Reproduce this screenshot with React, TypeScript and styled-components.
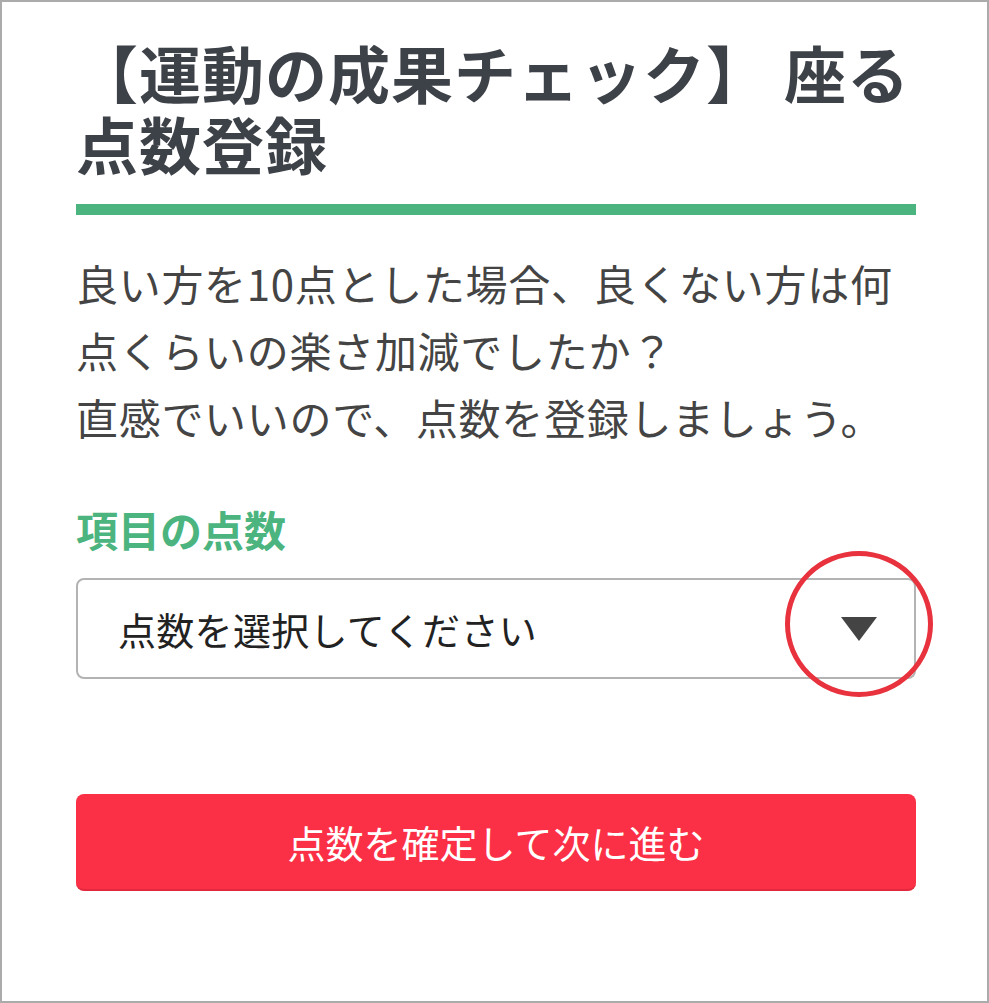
import styled, { createGlobalStyle } from "styled-components";

const GlobalStyle = createGlobalStyle`
  html, body {
    margin: 0;
    padding: 0;
    background: #fff;
  }
  body {
    font-family: "Noto Sans CJK JP", "Noto Sans", sans-serif;
  }
`;

const Frame = styled.div`
  box-sizing: border-box;
  width: 989px;
  height: 1003px;
  border: 2px solid #ababab;
  background: #fff;
  padding: 35px 71px 0 74px;
`;

const Title = styled.h1`
  margin: 0;
  padding-bottom: 25px;
  border-bottom: 11px solid #4cb47f;
  font-size: 62px;
  line-height: 71px;
  font-weight: 700;
  letter-spacing: 1px;
  color: #3d4148;
`;

const Lead = styled.p`
  margin: 34px 0 0;
  font-size: 42px;
  line-height: 67px;
  letter-spacing: 0.7px;
  color: #444;
`;

const Label = styled.div`
  margin-top: 49px;
  font-size: 42px;
  line-height: 59px;
  font-weight: 700;
  color: #4cb47f;
`;

const SelectWrap = styled.div`
  position: relative;
  margin-top: 20px;
`;

const SelectBox = styled.div`
  box-sizing: border-box;
  height: 101px;
  display: flex;
  align-items: center;
  justify-content: space-between;
  padding: 0 37px 0 40px;
  border: 2px solid #b3b3b3;
  border-radius: 8px;
  background: #fff;
  font-size: 38px;
  letter-spacing: 0.3px;
  color: #222;
`;

const Arrow = styled.svg`
  width: 36px;
  height: 24px;
  flex: none;
`;

const Highlight = styled.div`
  position: absolute;
  left: 709px;
  top: -27px;
  width: 148px;
  height: 146px;
  box-sizing: border-box;
  border: 5px solid #e8323e;
  border-radius: 50%;
  pointer-events: none;
`;

const SubmitButton = styled.button`
  display: block;
  box-sizing: border-box;
  width: 100%;
  height: 97px;
  margin-top: 115px;
  border: none;
  border-bottom: 2px solid #e2283c;
  border-radius: 8px;
  background: #fb3046;
  color: #fff;
  font-family: inherit;
  font-size: 38px;
  cursor: pointer;
`;

const App = () => {
  return (
    <>
      <GlobalStyle />
      <Frame>
        <Title>【運動の成果チェック】 座る点数登録</Title>
        <Lead>
          良い方を10点とした場合、良くない方は何
          <br />
          点くらいの楽さ加減でしたか？
          <br />
          直感でいいので、点数を登録しましょう。
        </Lead>
        <Label>項目の点数</Label>
        <SelectWrap>
          <SelectBox>
            <span>点数を選択してください</span>
            <Arrow viewBox="0 0 36 24">
              <polygon points="0,0 36,0 18,24" fill="#444" />
            </Arrow>
          </SelectBox>
          <Highlight />
        </SelectWrap>
        <SubmitButton>点数を確定して次に進む</SubmitButton>
      </Frame>
    </>
  );
};

export default App;
